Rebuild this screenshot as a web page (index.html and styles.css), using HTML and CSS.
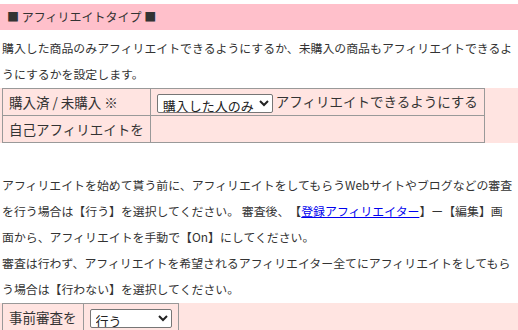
FILE: index.html
```html
<!DOCTYPE html>
<html lang="ja">
<head>
    <meta charset="UTF-8">
    <title>アフィリエイトタイプ</title>
    <link rel="stylesheet" href="styles.css">
</head>
<body>
    <div class="title">■ アフィリエイトタイプ ■</div>

    <p class="desc">購入した商品のみアフィリエイトできるようにするか、未購入の商品もアフィリエイトできるようにするかを設定します。</p>

    <div class="setting">
        <table class="form">
            <tr>
                <th>購入済 / 未購入 ※</th>
                <td>
                    <select class="sel-buy">
                        <option>購入した人のみ</option>
                        <option>全ての人</option>
                    </select>
                    アフィリエイトできるようにする
                </td>
            </tr>
            <tr>
                <th>自己アフィリエイトを</th>
                <td></td>
            </tr>
        </table>
    </div>

    <p class="desc gap">アフィリエイトを始めて貰う前に、アフィリエイトをしてもらうWebサイトやブログなどの審査を行う場合は【行う】を選択してください。 審査後、【<a href="#">登録アフィリエイター</a>】ー【編集】画<br>面から、アフィリエイトを手動で【On】にしてください。<br>審査は行わず、アフィリエイトを希望されるアフィリエイター全てにアフィリエイトをしてもらう場合は【行わない】を選択してください。</p>

    <div class="setting">
        <table class="form">
            <tr>
                <th>事前審査を</th>
                <td>
                    <select class="sel-check">
                        <option>行う</option>
                        <option>行わない</option>
                    </select>
                </td>
            </tr>
        </table>
    </div>
</body>
</html>
```

FILE: styles.css
```css
body {
    margin: 0;
    padding: 4px 0 0;
    color: #333;
    font-family: "Noto Sans CJK JP", "Noto Sans", sans-serif;
    background-color: #fff;
    text-spacing-trim: space-all;
}

.title {
    height: 26px;
    line-height: 26px;
    padding-left: 7px;
    font-size: 12px;
    background-color: #ffc0cb;
}

.desc {
    margin: 5px 0 1px;
    padding: 0 2px;
    font-size: 11.9px;
    line-height: 26px;
}

.desc.gap {
    margin-top: 29px;
}

.desc a {
    color: #0000ee;
}

.setting {
    background-color: #ffe4e1;
}

.form {
    border-collapse: collapse;
    margin-left: 2px;
}

.form th,
.form td {
    border: 1px solid #999;
    height: 26px;
    padding: 0 6px;
    font-size: 13.5px;
    font-weight: normal;
    text-align: left;
    white-space: nowrap;
}

.form select {
    height: 19px;
    padding: 0 1px;
    font-family: "Noto Sans CJK JP", sans-serif;
    font-size: 13px;
    color: #222;
    background-color: #fff;
    border: 1px solid #767676;
    border-radius: 2px;
    vertical-align: middle;
}

.sel-check {
    width: 82px;
}
```
